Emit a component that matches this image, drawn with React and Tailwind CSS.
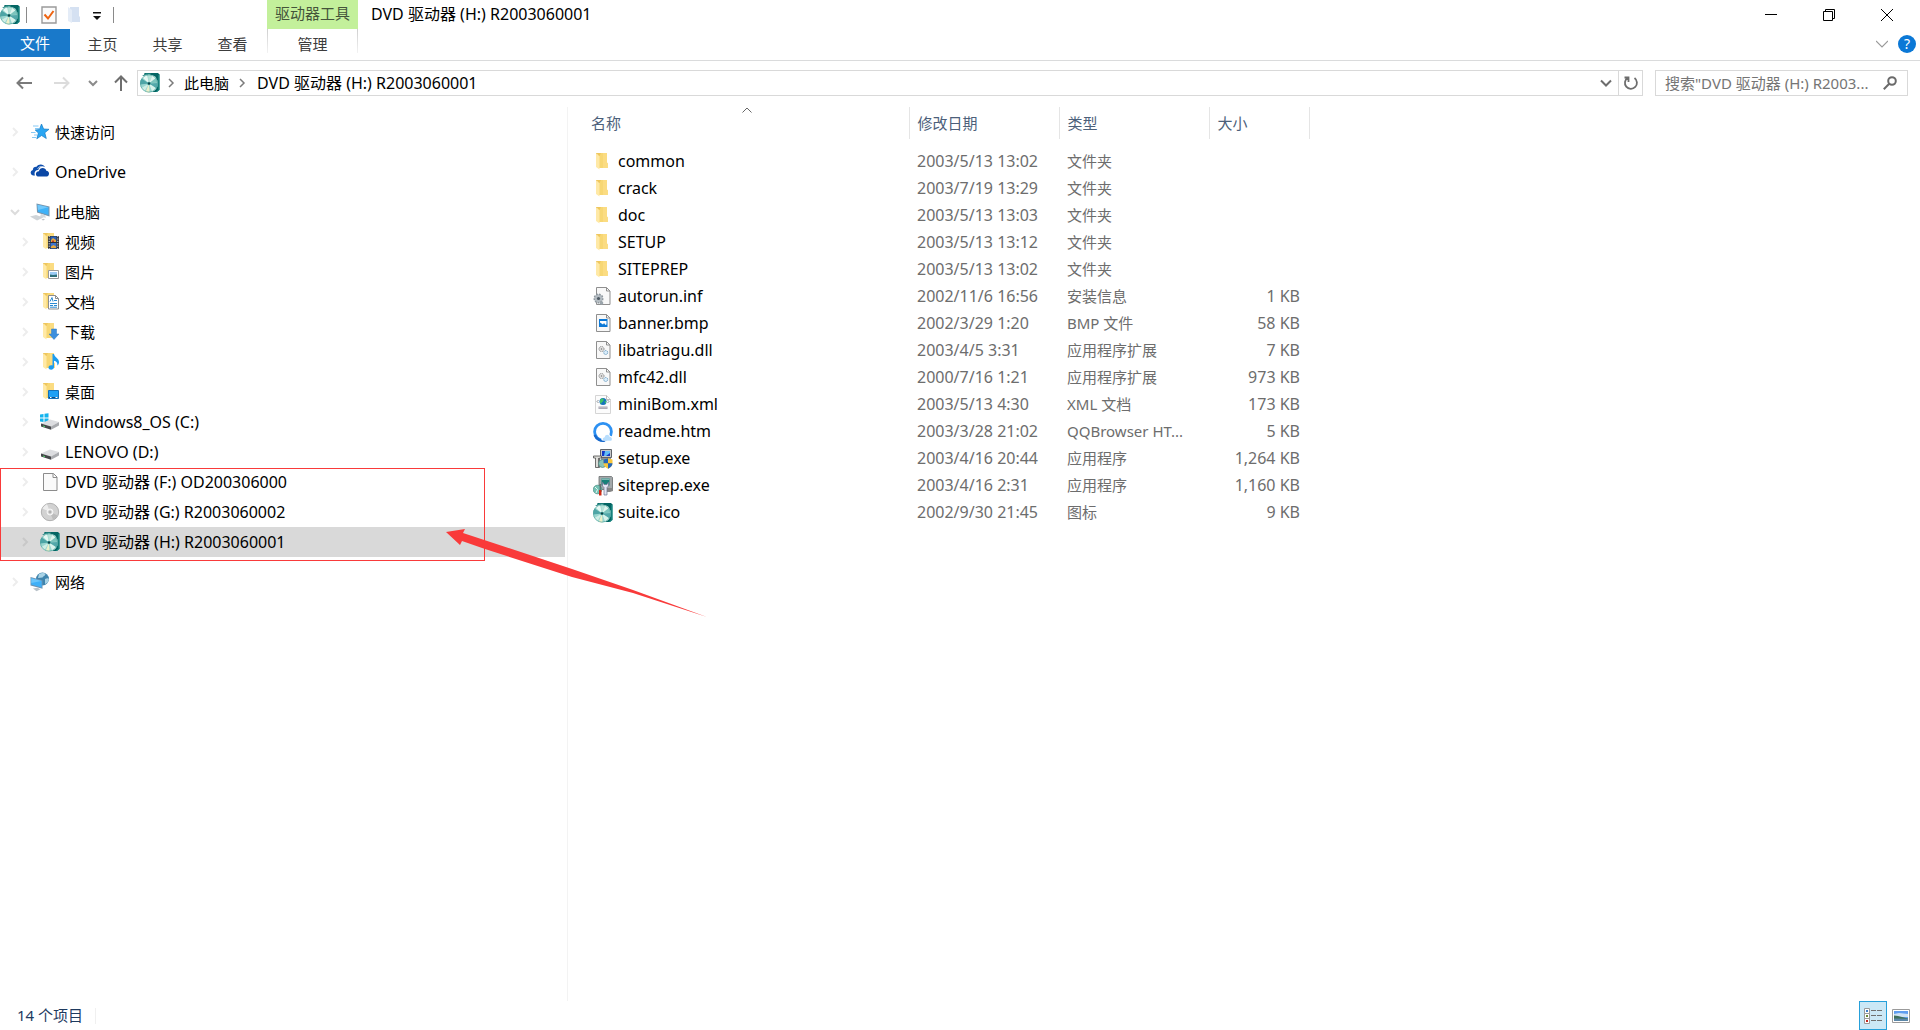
import { useState } from 'react';

/* ---------- icons ---------- */

function DiscIcon() {
  return (
    <svg className="w-5 h-5 shrink-0" viewBox="0 0 20 20">
      <path d="M4.500 0H18l1.500 1.500V17L17 19H8L3 9z" fill="#046664" />
      <path d="M19 2v14.500L16.500 19" fill="none" stroke="#2a9a94" />
      <path d="M2 3 6 .5h5L9 3H4z" fill="#2f8d89" />
      <circle cx="9" cy="10.500" r="8.900" fill="#9ad6cf" />
      <path d="M9 10.500 2.500 4.500A9 9 0 0 1 7 1.800z" fill="#e6f8f3" />
      <path d="M9 10.500 8 1.700a9 9 0 0 1 4.500.6z" fill="#b6e2d8" />
      <path d="M9 10.500 12.500 2.300a9 9 0 0 1 3.500 2.600z" fill="#dff5ee" />
      <path d="M9 10.500 16 5a9 9 0 0 1 1.800 4.500z" fill="#7cc4bd" />
      <path d="M9 10.500 17.900 10a9 9 0 0 1-1.400 5.500z" fill="#53a8aa" />
      <path d="M9 10.500 16.400 15.500a9 9 0 0 1-4.200 3.200z" fill="#d9f3ec" />
      <path d="M9 10.500 9.500 19.400a9 9 0 0 1-3.700-.6z" fill="#eef0c8" />
      <path d="M9 10.500 4.500 18.200a9 9 0 0 1-3-3.300z" fill="#cfeee6" />
      <path d="M9 10.500 .2 11.500A9 9 0 0 1 1.600 5.600z" fill="#4ea5a6" />
      <circle cx="9" cy="10.500" r="8.600" fill="none" stroke="#4c9f9a" strokeWidth=".6" />
      <circle cx="9" cy="10.500" r="1.800" fill="#3a928f" />
      <circle cx="9" cy="10.500" r="1" fill="#0b3a3e" />
    </svg>
  );
}

function FolderIcon({ children }) {
  return (
    <svg className="w-5 h-5 shrink-0" viewBox="0 0 20 20">
      <path d="M5 1h9v9.500l.8 1V16H5z" fill="#f7d774" />
      <path d="M10 1h4v9.500l.8 1V16H10z" fill="#fbdc82" />
      <path d="M3 1.500 6.500 4v13.500L3 15z" fill="#ffe9a6" />
      <path d="M3 1h5L6.500 4 3 1.500z" fill="#efc75e" />
      {children}
    </svg>
  );
}

function VideoIcon() {
  return (
    <FolderIcon>
      <path d="M8 4h11v13H8z" fill="#2f3034" />
      <path d="M10.500 4.500h6v5.500h-6z" fill="#2b62b8" />
      <path d="M10.500 11h6v5.500h-6z" fill="#3c74cf" />
      <path d="M11 8l2-2 3 2v2h-5zM11 14.500l2.500-1.500 2.500 1.500v1.500h-5z" fill="#e7a63b" />
      <path d="M12 8.500h2v1.500h-2z" fill="#b83b36" />
      <path d="M9.200 4v13M17.800 4v13" stroke="#e8e8e8" strokeDasharray="1.200 1.200" />
    </FolderIcon>
  );
}

function PictureIcon() {
  return (
    <FolderIcon>
      <path d="M8.500 8.500h10v8h-10z" fill="#fff" stroke="#9a9a9a" />
      <path d="M10 10h7v5h-7z" fill="#9ccbf5" />
      <path d="M10 12.500l3 .5 4-.5V15h-7z" fill="#2f6f79" />
    </FolderIcon>
  );
}

function DocumentIcon() {
  return (
    <FolderIcon>
      <path d="M8.500 3.500h7l3 3v10.500h-10z" fill="#fff" stroke="#8d8d8d" />
      <path d="M15.500 3.500v3h3" fill="none" stroke="#8d8d8d" />
      <path d="M10 9.500l2-4 1 4M14 8.500h3M10 11.500h7M10 13.500h3M10 15.200h7M14 13.500h3" stroke="#2c8ad1" fill="none" />
    </FolderIcon>
  );
}

function DownloadIcon() {
  return (
    <FolderIcon>
      <path d="M11.500 7h5v5h2.500l-5 5.500-5-5.500h2.500z" fill="#3d8fdd" stroke="#2b79c4" strokeWidth=".5" />
    </FolderIcon>
  );
}

function MusicIcon() {
  return (
    <FolderIcon>
      <path d="M12.500 2H14c.3 3.200 5 4.200 5 8 0 1.800-.8 2.800-1.600 3.500.3-2.800-1-4.200-3.400-4.800V15c0 3.500-5.500 3.500-5.500.5 0-2 2.300-2.700 4-2z" fill="#1b9cf0" />
    </FolderIcon>
  );
}

function DesktopIcon() {
  return (
    <FolderIcon>
      <path d="M8.500 8.500h10v8h-10z" fill="#1ea0f5" stroke="#1470b8" />
      <path d="M9 15.500h9" stroke="#0d4c86" />
      <path d="M10 15.500h1.500M15.500 15.500h2" stroke="#fff" />
    </FolderIcon>
  );
}

function StarIcon() {
  return (
    <svg className="w-5 h-5 shrink-0" viewBox="0 0 20 20">
      <path d="M11.500 2l2.100 5 5.400.3-4.200 3.500 1.500 5.700-4.700-3-4.800 3.300 1.600-5.800-3.200-3 4.200-.5z" fill="#2aa6f3" stroke="#157bc4" strokeWidth=".7" />
      <path d="M3 4h5.500M5 6.500h4M1 10.500h4.500M4 13h3M2 15.500h4" stroke="#86c9f5" />
    </svg>
  );
}

function CloudIcon() {
  return (
    <svg className="w-5 h-5 shrink-0" viewBox="0 0 20 20">
      <path d="M5 13.500H3a2.800 2.800 0 0 1-.2-5.500 3.500 3.500 0 0 1 3.700-3.200A5 5 0 0 1 15 5c-3.500-1.400-6 .3-6.700 3-3-.2-4.600 2.700-3.300 5.500z" fill="#0f4fae" />
      <path d="M8 14.500c-2.800-.3-3-5 .9-5.200.6-4.300 6.600-4.500 7.400-.6 3.600.2 3.600 5.400.4 5.800z" fill="#0a47a5" />
      <path d="M7.500 6.500A4.500 4.500 0 0 1 13 5" stroke="#fff" strokeWidth=".7" fill="none" />
    </svg>
  );
}

function ComputerIcon() {
  return (
    <svg className="w-5 h-5 shrink-0" viewBox="0 0 20 20">
      <path d="M6.500 1.500 19.500 4.500v10L7 10.500z" fill="#7894ab" />
      <path d="M7.500 2.800 18.500 5.300v7.700L8 9.800z" fill="#3fb2f8" />
      <path d="M7.500 2.800 18.500 5.300 8 8z" fill="#71c8fb" />
      <path d="M11 12l4 1.200 1 2.500-6-1z" fill="#d5dade" />
      <path d="M0 14.500l6-1.500 7.500 2.500-6.500 3z" fill="#cfd4d8" />
      <path d="M11.500 17.500l2-.8 1.500.8-2 1z" fill="#bdc3c8" />
    </svg>
  );
}

function DriveIcon({ windows }) {
  return (
    <svg className="w-5 h-5 shrink-0" viewBox="0 0 20 20">
      {windows && <path d="M0 2.500 3.500 2v3.500H0zM4.500 1.800 8.500 1.200v4.300h-4zM0 6.500h3.500V10L0 9.500zM4.500 6.500h4v4.300l-4-.6z" fill="#14b4ee" />}
      <path d="M1 11.500 10 7.500l9 2.500-8 4.500z" fill="#dcdde0" />
      <path d="M1 11.500l10 3v3.200L1 14.500z" fill="#45474a" />
      <path d="M11 14.500l8-4.500v3.500l-8 4.200z" fill="#a9abaf" />
      <path d="M3 14l2 .7" stroke="#4fd36a" />
    </svg>
  );
}

function BlankPageIcon() {
  return (
    <svg className="w-5 h-5 shrink-0" viewBox="0 0 20 20">
      <path d="M3.500 1.500h10l3.500 3.500v13.500H3.500z" fill="#fafafa" stroke="#8c8c8c" />
      <path d="M13 1.500V5.500h4" fill="none" stroke="#8c8c8c" />
    </svg>
  );
}

function CdIcon() {
  return (
    <svg className="w-5 h-5 shrink-0" viewBox="0 0 20 20">
      <circle cx="10" cy="10" r="8.700" fill="#d2d2d2" stroke="#a3a3a3" strokeWidth=".8" />
      <path d="M10 10 2.500 6.500A8.300 8.300 0 0 1 7 2.300z" fill="#ededed" />
      <path d="M10 10l7.500 3.500a8.300 8.300 0 0 1-4.500 4.200z" fill="#bcbcbc" />
      <circle cx="10" cy="10" r="3" fill="#e6e6e6" stroke="#f5f5f5" strokeWidth="1" />
      <circle cx="10" cy="10" r="1.200" fill="#c4c4c4" stroke="#9a9a9a" strokeWidth=".6" />
    </svg>
  );
}

function NetworkIcon() {
  return (
    <svg className="w-5 h-5 shrink-0" viewBox="0 0 20 20">
      <circle cx="12.500" cy="7" r="6.500" fill="#3f84ad" />
      <path d="M9 2c3-1.500 5.500-1 6.500 0-.5 2-2 2-3 3.500L8 6zM15 7c2-1 3.500-1 4 0-.5 3-2 4.500-4 5z" fill="#a9d3e6" />
      <path d="M.5 5 12.500 8.300v8.500L.5 13.500z" fill="#6d93b3" />
      <path d="M1.300 6.200 11.700 9.100v6.500L1.300 12.500z" fill="#3fb0f8" />
      <path d="M1.300 6.200 11.700 9.100 1.300 11z" fill="#6ac5fb" />
      <path d="M3 16.500l4.500-.8 3 1.500-4 2z" fill="#b9c2c9" />
    </svg>
  );
}

function PageIcon({ children }) {
  return (
    <svg className="w-5 h-5 shrink-0" viewBox="0 0 20 20">
      <path d="M3.500 .5h10l3.500 3.500v13.500H3.500z" fill="#f8f8f8" stroke="#8f8f8f" />
      <path d="M13.500 .5V4H17" fill="none" stroke="#8f8f8f" />
      {children}
    </svg>
  );
}

function InfIcon() {
  return (
    <PageIcon>
      <circle cx="5.500" cy="11.500" r="4.300" fill="#b4bcc2" stroke="#8e979e" strokeWidth="1.400" strokeDasharray="1.700 1.200" />
      <circle cx="5.500" cy="11.500" r="1.600" fill="#4d5963" />
      <circle cx="8.500" cy="16" r="1.800" fill="#9ba5ac" />
    </PageIcon>
  );
}

function BmpIcon() {
  return (
    <PageIcon>
      <path d="M6 5h8.500v8H6z" fill="#0d79d7" />
      <path d="M7 7h6.500v3.500l-1 .5-1.500-2-1 1.500L7 8.500z" fill="#fff" />
    </PageIcon>
  );
}

function DllIcon() {
  return (
    <PageIcon>
      <circle cx="8.500" cy="8" r="2.500" fill="#e4e4e4" stroke="#8b8b8b" strokeDasharray="1.300 .7" />
      <circle cx="8.500" cy="8" r=".8" fill="#777" />
      <circle cx="12.700" cy="11.500" r="2" fill="#d9ecfa" stroke="#6b9dc0" strokeDasharray="1.300 .6" />
    </PageIcon>
  );
}

function XmlIcon() {
  return (
    <svg className="w-5 h-5 shrink-0" viewBox="0 0 20 20">
      <path d="M2.500 .5h11l4 4v14h-15z" fill="#fcfcfc" stroke="#d5d5d5" />
      <path d="M13.500 .5v4h4" fill="none" stroke="#bdbdbd" />
      <path d="M5.500 5 4 6.500 5.500 8M14.500 5 16 6.500 14.500 8" fill="none" stroke="#8a9198" />
      <circle cx="10" cy="6.500" r="3.500" fill="#1673bd" />
      <path d="M8 4c2-1 3 0 2.500 1.500S8.500 7 8 9C6.500 8 6.500 5 8 4zM11.500 6.500l2-.5-1 3z" fill="#43c463" />
      <path d="M5.500 11.500h9V14h-9z" fill="#aaa7b3" />
      <path d="M5.500 12.700h9" stroke="#cfcdd5" strokeWidth=".6" />
    </svg>
  );
}

function BrowserIcon() {
  return (
    <svg className="w-5 h-5 shrink-0" viewBox="0 0 20 20">
      <circle cx="10" cy="9.800" r="8.400" fill="#fff" stroke="#2d91f2" strokeWidth="2.800" />
      <path d="M1.700 13a8.700 8.700 0 0 0 10 5.500" fill="none" stroke="#1768cc" strokeWidth="2.400" />
      <path d="M9 18.500c-1.500-1.500-.5-4 1.500-4.200.3-4.500 6-4.300 6.500-.6 3 .3 3.500 3.800 1.800 5.300z" fill="#fff" />
      <path d="M10.500 18.500c-1.500-1.200-.5-3 1.200-3.200.5-3.500 4.500-3.200 4.800-.5 2.500.2 3 2.700 1.700 3.900z" fill="#b9defd" />
    </svg>
  );
}

function SetupIcon() {
  return (
    <svg className="w-5 h-5 shrink-0" viewBox="0 0 20 20">
      <path d="M7.500 .5h11v8h-11z" fill="#c4c6c9" stroke="#5f6368" />
      <path d="M9 2h8v5H9z" fill="#1238c8" />
      <path d="M12 2h5v2l-4 3h-2z" fill="#63bdf5" />
      <path d="M8 9h10v2H8z" fill="#8f9296" />
      <path d="M.5 7h8v2H6.500v9.500h-4V9h-2z" fill="#dcdcd8" stroke="#4e4e4e" strokeWidth=".8" />
      <path d="M5.500 9v9.500" stroke="#6f6f6f" />
      <circle cx="9.500" cy="14.500" r="4" fill="#89c3b9" stroke="#4c7f7b" strokeWidth=".7" />
      <path d="M10.500 10.500 15 9.200l4.500 1.300v3.500c0 3-2 4.300-4.500 5.800-2.500-1.500-4.500-2.800-4.500-5.800z" fill="#f7c63c" />
      <path d="M10.500 10.500 15 9.200v5h-4.500zM15 14.200h4.500c0 2.800-2 4.200-4.500 5.600z" fill="#2366ba" />
    </svg>
  );
}

function SiteprepIcon() {
  return (
    <svg className="w-5 h-5 shrink-0" viewBox="0 0 20 20">
      <path d="M6 .5h12.500l1 1v12H6z" fill="#a3a8aa" stroke="#6a6e70" strokeWidth=".8" />
      <path d="M8.500 2.500h8v7h-8z" fill="#178079" />
      <path d="M8.500 2.500h8v1.500h-8z" fill="#7fb8b3" />
      <path d="M14 12h6v3l-3 1h-3z" fill="#858585" />
      <circle cx="4.500" cy="13.500" r="4.300" fill="#73c1b4" stroke="#468c83" strokeWidth=".7" />
      <path d="M2 11l2.500 2.500L3 17" stroke="#e5f7f2" fill="none" />
      <path d="M9.500 6v4l1.500 1.500v7.500h3v-7.500l1.500-1.500V6L14 8.500h-3z" fill="#e2e4f2" stroke="#6c7391" strokeWidth=".7" />
      <path d="M6 14h2.500v5.500H6z" fill="#cf2b16" />
      <path d="M7.200 8v6" stroke="#555" />
    </svg>
  );
}

function Chevron({ className, d = 'M3 1l4 4-4 4', width = 2 }) {
  return (
    <svg className={`w-2.5 h-2.5 shrink-0 ${className}`} viewBox="0 0 10 10" fill="none" stroke="currentColor" strokeWidth={width}>
      <path d={d} />
    </svg>
  );
}

const DOWN = 'M1 3l4 4 4-4';

/* ---------- data ---------- */

const thisPc = [
  { name: '视频', icon: VideoIcon },
  { name: '图片', icon: PictureIcon },
  { name: '文档', icon: DocumentIcon },
  { name: '下载', icon: DownloadIcon },
  { name: '音乐', icon: MusicIcon },
  { name: '桌面', icon: DesktopIcon },
  { name: 'Windows8_OS (C:)', icon: () => <DriveIcon windows />, latin: true },
  { name: 'LENOVO (D:)', icon: DriveIcon, latin: true },
];

const dvdDrives = [
  { name: 'DVD 驱动器 (F:) OD200306000', icon: BlankPageIcon, latin: true },
  { name: 'DVD 驱动器 (G:) R2003060002', icon: CdIcon, latin: true },
  { name: 'DVD 驱动器 (H:) R2003060001', icon: DiscIcon, latin: true },
];

const files = [
  { name: 'common', date: '2003/5/13 13:02', type: '文件夹', size: '', icon: FolderIcon },
  { name: 'crack', date: '2003/7/19 13:29', type: '文件夹', size: '', icon: FolderIcon },
  { name: 'doc', date: '2003/5/13 13:03', type: '文件夹', size: '', icon: FolderIcon },
  { name: 'SETUP', date: '2003/5/13 13:12', type: '文件夹', size: '', icon: FolderIcon },
  { name: 'SITEPREP', date: '2003/5/13 13:02', type: '文件夹', size: '', icon: FolderIcon },
  { name: 'autorun.inf', date: '2002/11/6 16:56', type: '安装信息', size: '1 KB', icon: InfIcon },
  { name: 'banner.bmp', date: '2002/3/29 1:20', type: 'BMP 文件', size: '58 KB', icon: BmpIcon },
  { name: 'libatriagu.dll', date: '2003/4/5 3:31', type: '应用程序扩展', size: '7 KB', icon: DllIcon },
  { name: 'mfc42.dll', date: '2000/7/16 1:21', type: '应用程序扩展', size: '973 KB', icon: DllIcon },
  { name: 'miniBom.xml', date: '2003/5/13 4:30', type: 'XML 文档', size: '173 KB', icon: XmlIcon },
  { name: 'readme.htm', date: '2003/3/28 21:02', type: 'QQBrowser HT...', size: '5 KB', icon: BrowserIcon },
  { name: 'setup.exe', date: '2003/4/16 20:44', type: '应用程序', size: '1,264 KB', icon: SetupIcon },
  { name: 'siteprep.exe', date: '2003/4/16 2:31', type: '应用程序', size: '1,160 KB', icon: SiteprepIcon },
  { name: 'suite.ico', date: '2002/9/30 21:45', type: '图标', size: '9 KB', icon: DiscIcon },
];

/* ---------- layout ---------- */

function TitleBar() {
  return (
    <header className="border-b border-[#dadbdc]">
      <div className="flex h-[29px]">
        <div className="flex w-[267px] items-center">
          <DiscIcon />
          <span className="ml-1.5 h-4 w-px bg-[#8a8a8a]" />
          <button aria-label="属性" className="ml-3.5">
            <svg className="w-4 h-[18px]" viewBox="0 0 16 18">
              <path d="M1 1h14v16H1z" fill="#fbfbfb" stroke="#9a9a9a" strokeWidth="1.400" />
              <path d="M3.500 8.500l3.500 4L12.500 5" fill="none" stroke="#ee6411" strokeWidth="2" />
            </svg>
          </button>
          <button aria-label="新建文件夹" className="ml-2.5">
            <svg className="w-4 h-[18px]" viewBox="0 0 16 18">
              <path d="M3 1h9v9l1 1v5H3z" fill="#d5e1f2" />
              <path d="M1 1l4 3v13l-4-2z" fill="#e4ecf7" />
            </svg>
          </button>
          <button aria-label="自定义快速访问工具栏" className="ml-2.5">
            <svg className="w-2 h-4" viewBox="0 0 8 16">
              <path d="M0 5h8v1.500H0zM0 9h8l-4 4z" fill="#111" />
            </svg>
          </button>
          <span className="ml-3 h-4 w-px bg-[#8a8a8a]" />
        </div>
        <div className="w-[91px] bg-[#c3f09b] text-center text-[15px] leading-[26px] text-[#44543a]">驱动器工具</div>
        <h1 className="ml-[13px] text-base leading-[29px]">DVD 驱动器 (H:) R2003060001</h1>
        <div className="ml-auto flex h-[29px]">
          <button aria-label="最小化" className="flex w-[58px] items-center justify-center">
            <svg className="w-3 h-3" viewBox="0 0 12 12"><path d="M0 5.500h12" stroke="#000" /></svg>
          </button>
          <button aria-label="还原" className="flex w-[58px] items-center justify-center">
            <svg className="w-3 h-3" viewBox="0 0 12 12" fill="none" stroke="#000">
              <path d="M.5 2.500h9v9h-9zM2.500 2.500v-2h9v9h-2" />
            </svg>
          </button>
          <button aria-label="关闭" className="mr-1 flex w-[58px] items-center justify-center">
            <svg className="w-3 h-3" viewBox="0 0 12 12" stroke="#000"><path d="M0 0l12 12M12 0L0 12" /></svg>
          </button>
        </div>
      </div>
      <nav className="flex h-[31px] items-start text-[15px] leading-[30px] text-[#3c3c3c]">
        <button className="h-7 w-[70px] bg-[#1979ca] leading-[28px] text-white">文件</button>
        <button className="w-[65px]">主页</button>
        <button className="w-[65px]">共享</button>
        <button className="w-[65px]">查看</button>
        <div className="ml-0.5 flex h-6 bg-gradient-to-b from-[#cfcfcf] to-[#f2f2f2] px-px">
          <button className="h-[30px] w-[89px] bg-white">管理</button>
        </div>
        <div className="ml-auto mr-1 flex h-[30px] items-center gap-2.5">
          <button aria-label="展开功能区">
            <svg className="w-3 h-3" viewBox="0 0 12 12"><path d="M0 3l6 6 6-6" fill="none" stroke="#9b9b9b" strokeWidth="1.200" /></svg>
          </button>
          <button aria-label="帮助" className="h-[18px] w-[18px] rounded-full bg-[#0b78d6] text-center text-sm leading-[18px] text-white">?</button>
        </div>
      </nav>
    </header>
  );
}

function AddressBar() {
  return (
    <div className="mb-0.5 flex h-11 items-center pr-3">
      <div className="flex w-[137px] items-center">
        <button aria-label="后退" className="ml-4">
          <svg className="w-4 h-4" viewBox="0 0 16 16" fill="none" stroke="#7a7a7a" strokeWidth="2"><path d="M16 8H1.500M7 2.500 1.500 8 7 13.500" /></svg>
        </button>
        <button aria-label="前进" className="ml-[22px]">
          <svg className="w-4 h-4" viewBox="0 0 16 16" fill="none" stroke="#dcdcdc" strokeWidth="2"><path d="M0 8h14.500M9 2.500 14.500 8 9 13.500" /></svg>
        </button>
        <button aria-label="最近浏览的位置" className="ml-[18px] text-[#8b8b8b]"><Chevron d={DOWN} /></button>
        <button aria-label="上移" className="ml-4">
          <svg className="w-3.5 h-4" viewBox="0 0 14 16" fill="none" stroke="#6f6f6f" strokeWidth="2"><path d="M7 16V1.500M1 7.500l6-6 6 6" /></svg>
        </button>
      </div>
      <div className="flex h-[26px] flex-1 items-center border border-[#d9d9d9] pl-0.5">
        <DiscIcon />
        <Chevron className="ml-1.5 text-[#7b7b7b]" width={1.5} />
        <button className="ml-2 text-[15px] leading-6">此电脑</button>
        <Chevron className="ml-2 text-[#7b7b7b]" width={1.5} />
        <button className="ml-2.5 text-base leading-6">DVD 驱动器 (H:) R2003060001</button>
        <button aria-label="上一个位置" className="ml-auto mr-1.5 text-[#6d6d6d]">
          <svg className="w-3 h-3" viewBox="0 0 12 12"><path d="M1 3.500l5 5 5-5" fill="none" stroke="currentColor" strokeWidth="2" /></svg>
        </button>
        <button aria-label="刷新" className="flex h-full w-6 items-center justify-center border-l border-[#d9d9d9]">
          <svg className="w-4 h-4" viewBox="0 0 16 16" fill="none" stroke="#6d6d6d" strokeWidth="1.800">
            <path d="M11.500 3A6 6 0 1 1 4.800 2.700M1.500 2.500h4V7" />
          </svg>
        </button>
      </div>
      <label className="ml-3 flex h-[26px] w-[253px] items-center border border-[#d9d9d9] pl-[9px] pr-2.5">
        <input
          aria-label="搜索"
          placeholder={'搜索"DVD 驱动器 (H:) R2003...'}
          className="min-w-0 flex-1 text-[15px] leading-6 outline-none placeholder:text-[#757575]"
        />
        <svg className="w-3.5 h-3.5 shrink-0" viewBox="0 0 14 14" fill="none" stroke="#6a6a6a" strokeWidth="2">
          <circle cx="9" cy="5" r="3.800" />
          <path d="M6.200 7.800.8 13.200" />
        </svg>
      </label>
    </div>
  );
}

function TreeItem({ item, child, open, selected, onSelect }) {
  const Icon = item.icon;
  return (
    <button
      onClick={() => onSelect(item.name)}
      className={`flex h-[30px] w-full items-center text-left ${child ? 'pl-5' : 'pl-2.5'} ${selected ? 'bg-[#d9d9d9]' : ''}`}
    >
      <Chevron d={open ? DOWN : undefined} className={selected ? 'text-[#c8c8c8]' : open ? 'text-[#dcdcdc]' : 'text-[#ededed]'} />
      <span className="ml-2.5"><Icon /></span>
      <span className={`ml-[5px] ${item.latin ? 'text-base' : 'text-[15px]'}`}>{item.name}</span>
    </button>
  );
}

function Sidebar() {
  const [selected, setSelected] = useState('DVD 驱动器 (H:) R2003060001');
  const row = (item, props) => (
    <TreeItem key={item.name} item={item} selected={selected === item.name} onSelect={setSelected} {...props} />
  );

  return (
    <aside className="w-[568px] shrink-0 border-r border-[#f3f3f3] pr-0.5 pt-2.5">
      {row({ name: '快速访问', icon: StarIcon })}
      <div className="mt-2.5">{row({ name: 'OneDrive', icon: CloudIcon, latin: true })}</div>
      <div className="mt-2.5">{row({ name: '此电脑', icon: ComputerIcon }, { open: true })}</div>
      {thisPc.map((item) => row(item, { child: true }))}
      <div className="relative">
        {dvdDrives.map((item) => row(item, { child: true }))}
        {/* Red callout over the mounted discs */}
        <div className="pointer-events-none absolute left-0 top-px h-[93px] w-[485px] border border-[#f93a3a]" />
        <svg className="pointer-events-none absolute left-[446px] top-[62px] h-[90px] w-[262px]" viewBox="0 0 262 90">
          <path d="M0 3 19 0 17 4 126 40 187 61 261 88 187 64 126 48 39 20 16 12 14 16z" fill="#f93a3a" />
        </svg>
      </div>
      <div className="mt-2.5">{row({ name: '网络', icon: NetworkIcon })}</div>
    </aside>
  );
}

function FileList() {
  return (
    <main className="min-w-0 flex-1">
      <table className="table-fixed border-collapse">
        <colgroup>
          <col className="w-[341px]" />
          <col className="w-[150px]" />
          <col className="w-[150px]" />
          <col className="w-[100px]" />
        </colgroup>
        <thead>
          <tr className="h-8 text-left text-[15px] leading-8 text-[#4c607a]">
            <th className="relative border-r border-[#e5e5e5] p-0 pl-[23px] font-normal">
              <button>名称</button>
              <svg className="absolute left-[174px] top-0 h-1.5 w-2.5" viewBox="0 0 10 6">
                <path d="M.5 5.500 5 1l4.500 4.500" fill="none" stroke="#666" />
              </svg>
            </th>
            <th className="border-r border-[#e5e5e5] p-0 pl-2 font-normal"><button>修改日期</button></th>
            <th className="border-r border-[#e5e5e5] p-0 pl-2 font-normal"><button>类型</button></th>
            <th className="border-r border-[#e5e5e5] p-0 pl-2 font-normal"><button>大小</button></th>
          </tr>
        </thead>
        <tbody className="text-[15px] leading-[27px] text-[#6d6d6d] before:block before:h-[9px]">
          {files.map(({ icon: Icon, ...f }) => (
            <tr key={f.name} className="h-[27px]">
              <td className="p-0 pl-[25px] text-base leading-[27px] text-black">
                <div className="flex h-[27px] items-center gap-[5px]">
                  <Icon />
                  <span>{f.name}</span>
                </div>
              </td>
              <td className="whitespace-nowrap p-0 pl-2 text-base leading-[27px]">{f.date}</td>
              <td className="whitespace-nowrap p-0 pl-2">{f.type}</td>
              <td className="whitespace-nowrap p-0 pr-[9px] text-right text-base leading-[27px]">{f.size}</td>
            </tr>
          ))}
        </tbody>
      </table>
    </main>
  );
}

function StatusBar() {
  return (
    <footer className="flex h-[29px] items-center pl-[17px] pr-2.5">
      <span className="text-[15px] text-[#1e3a5f]">14 个项目</span>
      <span className="ml-3 h-4 w-px bg-[#f0f0f0]" />
      <button aria-label="详细信息" className="ml-auto flex h-[29px] w-7 items-center justify-center border border-[#26a0da] bg-[#cbe8f6]">
        <svg className="w-[18px] h-4" viewBox="0 0 18 16">
          <path d="M.5.5h5v5h-5zM.5 5.500h5v5h-5zM.5 10.500h5v5h-5z" fill="#fff" stroke="#9a9a9a" />
          <path d="M2 2h2v2H2z" fill="#3d7dc8" />
          <path d="M2 7h2v2H2z" fill="#6b8a35" />
          <path d="M2 12h2v2H2z" fill="#c4261d" />
          <path d="M7 2.500h5M13 2.500h5M7 7.500h5M13 7.500h5M7 12.500h5M13 12.500h5" stroke="#6f6f6f" />
        </svg>
      </button>
      <button aria-label="大缩略图" className="ml-[5px]">
        <svg className="w-[18px] h-3.5" viewBox="0 0 18 14">
          <path d="M.5.500h17v13H.5z" fill="#fff" stroke="#9a9a9a" />
          <path d="M2 2h14v10H2z" fill="#5f9df0" />
          <path d="M2 5l5-1 9 1v3H2z" fill="#cfe2f5" />
          <path d="M2 6.500l4 .5 10 2.500V10H2z" fill="#3f6f5c" />
          <path d="M2 9.500l14 .3V12H2z" fill="#5b87a8" />
        </svg>
      </button>
    </footer>
  );
}

export default function App() {
  return (
    <div className="flex min-h-screen flex-col bg-white font-['Noto_Sans','Noto_Sans_CJK_SC',sans-serif] text-black">
      <TitleBar />
      <AddressBar />
      <div className="flex flex-1">
        <Sidebar />
        <FileList />
      </div>
      <StatusBar />
    </div>
  );
}
